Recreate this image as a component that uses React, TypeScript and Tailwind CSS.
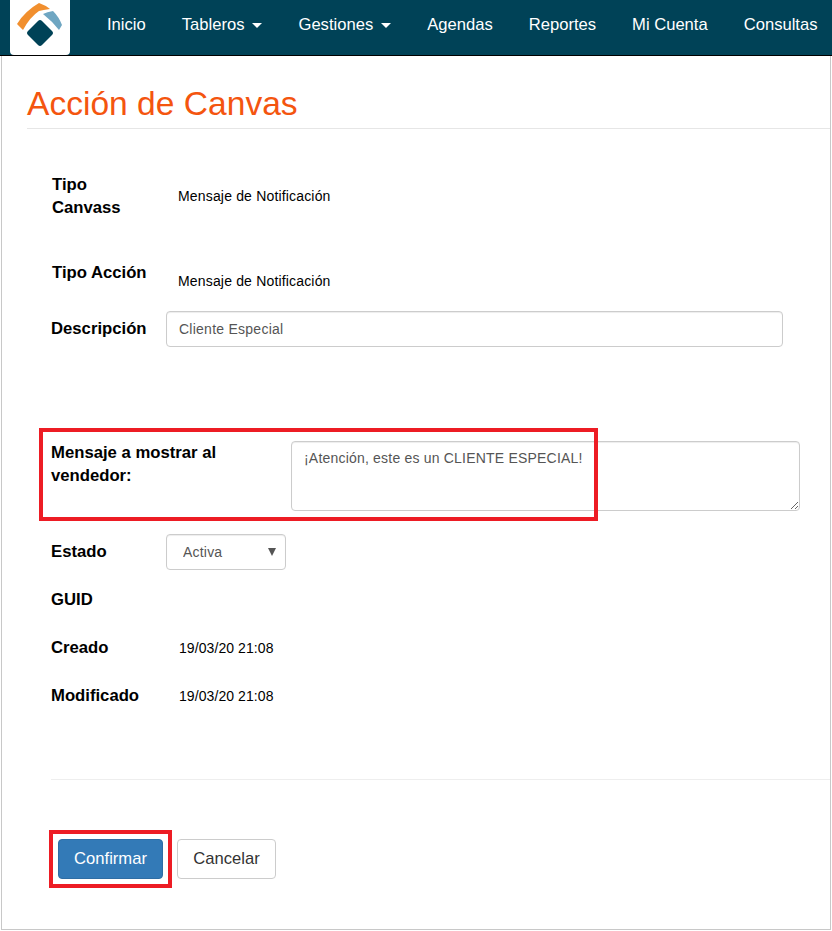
const font = { fontFamily: '"Liberation Sans", Arial, sans-serif' };

function Caret() {
  return <span className="ml-[8px] inline-block w-0 h-0 align-middle border-x-[5px] border-x-transparent border-t-[5px] border-t-white" />;
}

function Logo() {
  return (
    <svg width="60" height="55" viewBox="0 0 60 55" className="block">
      <path d="M7 24 Q 15 11 29 3 Q 35 5 40 9 Q 33 10 29 11 Q 20 17 13 30 Z" fill="#f18f2e" />
      <path d="M33 14 Q 37 12 43 11 Q 49 17 52 25 L 49 30 Q 42 21 33 14 Z" fill="#6fa6c2" />
      <path d="M28 21 Q 30 19 32 21 L 42 31 Q 44 33 42 35 L 32 45 Q 30 47 28 45 L 18 35 Q 16 33 18 31 Z" fill="#004257" />
    </svg>
  );
}

const navItems: [string, boolean][] = [
  ["Inicio", false],
  ["Tableros", true],
  ["Gestiones", true],
  ["Agendas", false],
  ["Reportes", false],
  ["Mi Cuenta", false],
  ["Consultas", false],
];

export default function App() {
  return (
    <div style={font} className="w-[832px] h-[931px] bg-white overflow-hidden text-black">
      <nav className="h-[56px] bg-[#004257] border-b border-black flex items-start pl-[10px]">
        <div className="w-[60px] h-[55px] bg-white rounded-b-[4px] shrink-0">
          <Logo />
        </div>
        <ul className="flex ml-[19px] text-[16.6px] leading-[23px] text-white whitespace-nowrap">
          {navItems.map(([label, caret]) => (
            <li key={label} className="px-[18px] pt-[13px]">
              {label}
              {caret && <Caret />}
            </li>
          ))}
        </ul>
      </nav>

      <main className="relative ml-[1px] w-[830px] h-[874px] border-x border-b border-[#c8c8c8] pl-[25px]">
        <h1 className="text-[#f4550f] text-[33.6px] leading-[40px] pt-[28px] h-[73px] border-b border-[#e6e6e6] box-border font-normal whitespace-nowrap">
          Acción de Canvas
        </h1>

        <section className="pl-[24px] text-[16.7px] leading-[23px] font-bold">
          <div className="flex mt-[44px] h-[46px] pl-[1px]">
            <div className="w-[126px]">Tipo<br />Canvass</div>
            <div className="text-[14px] tracking-[0.17px] font-normal pt-[12px] whitespace-nowrap">Mensaje de Notificación</div>
          </div>
          <div className="flex mt-[42px] h-[23px] pl-[1px]">
            <div className="w-[126px] whitespace-nowrap">Tipo Acción</div>
            <div className="text-[14px] tracking-[0.17px] font-normal pt-[9px] whitespace-nowrap">Mensaje de Notificación</div>
          </div>
          <div className="flex items-center mt-[27px] h-[36px]">
            <div className="w-[115px] pb-[1px]">Descripción</div>
            <input
              readOnly
              value="Cliente Especial"
              className="w-[617px] h-[36px] px-[12px] text-[14px] tracking-[0.25px] font-normal text-[#555] border border-[#ccc] rounded-[4px] outline-none shadow-[inset_0_1px_1px_rgba(0,0,0,0.075)]"
            />
          </div>

          <div className="flex mt-[94px] h-[70px]">
            <div className="w-[240px]">Mensaje a mostrar al<br />vendedor:</div>
            <textarea
              readOnly
              value="¡Atención, este es un CLIENTE ESPECIAL!"
              className="block w-[509px] h-[70px] px-[12px] py-[6px] text-[14px] tracking-[0.2px] leading-[20px] font-normal text-[#555] border border-[#ccc] rounded-[4px] outline-none shadow-[inset_0_1px_1px_rgba(0,0,0,0.075)]"
            />
          </div>

          <div className="flex items-center mt-[23px] h-[36px]">
            <div className="w-[115px] pb-[1px]">Estado</div>
            <div className="relative w-[120px] h-[36px]">
              <select className="w-full h-full pl-[16px] pr-[20px] appearance-none bg-white text-[14px] tracking-[0.2px] font-normal text-[#555] border border-[#ccc] rounded-[4px] outline-none shadow-[inset_0_1px_1px_rgba(0,0,0,0.075)]">
                <option>Activa</option>
              </select>
              <span className="absolute left-[102px] top-[14px] w-0 h-0 border-x-[4px] border-x-transparent border-t-[8px] border-t-[#555]" />
            </div>
          </div>

          <div className="flex mt-[18px] h-[23px]">
            <div className="w-[128px]">GUID</div>
          </div>
          <div className="flex items-end mt-[25px] h-[23px]">
            <div className="w-[128px]">Creado</div>
            <div className="text-[14px] tracking-[0.08px] font-normal pt-[1px] translate-y-[1px]">19/03/20 21:08</div>
          </div>
          <div className="flex items-end mt-[25px] h-[23px]">
            <div className="w-[128px]">Modificado</div>
            <div className="text-[14px] tracking-[0.08px] font-normal pt-[1px] translate-y-[1px]">19/03/20 21:08</div>
          </div>

          <hr className="mt-[72px] border-t border-[#eee]" />

          <div className="flex mt-[59px] pl-[7px] gap-[14px] font-normal">
            <button className="w-[105px] h-[40px] pb-[2px] bg-[#337ab7] border border-[#2e6da4] rounded-[4px] text-white text-[16.6px]">Confirmar</button>
            <button className="w-[99px] h-[40px] pb-[2px] bg-white border border-[#ccc] rounded-[4px] text-[#333] text-[16.6px]">Cancelar</button>
          </div>
        </section>

        <div className="absolute left-[37px] top-[372px] w-[559px] h-[93px] border-[4px] border-[#ed1c24] pointer-events-none" />
        <div className="absolute left-[47px] top-[774px] w-[123px] h-[58px] border-[4px] border-[#ed1c24] pointer-events-none" />
      </main>
    </div>
  );
}
